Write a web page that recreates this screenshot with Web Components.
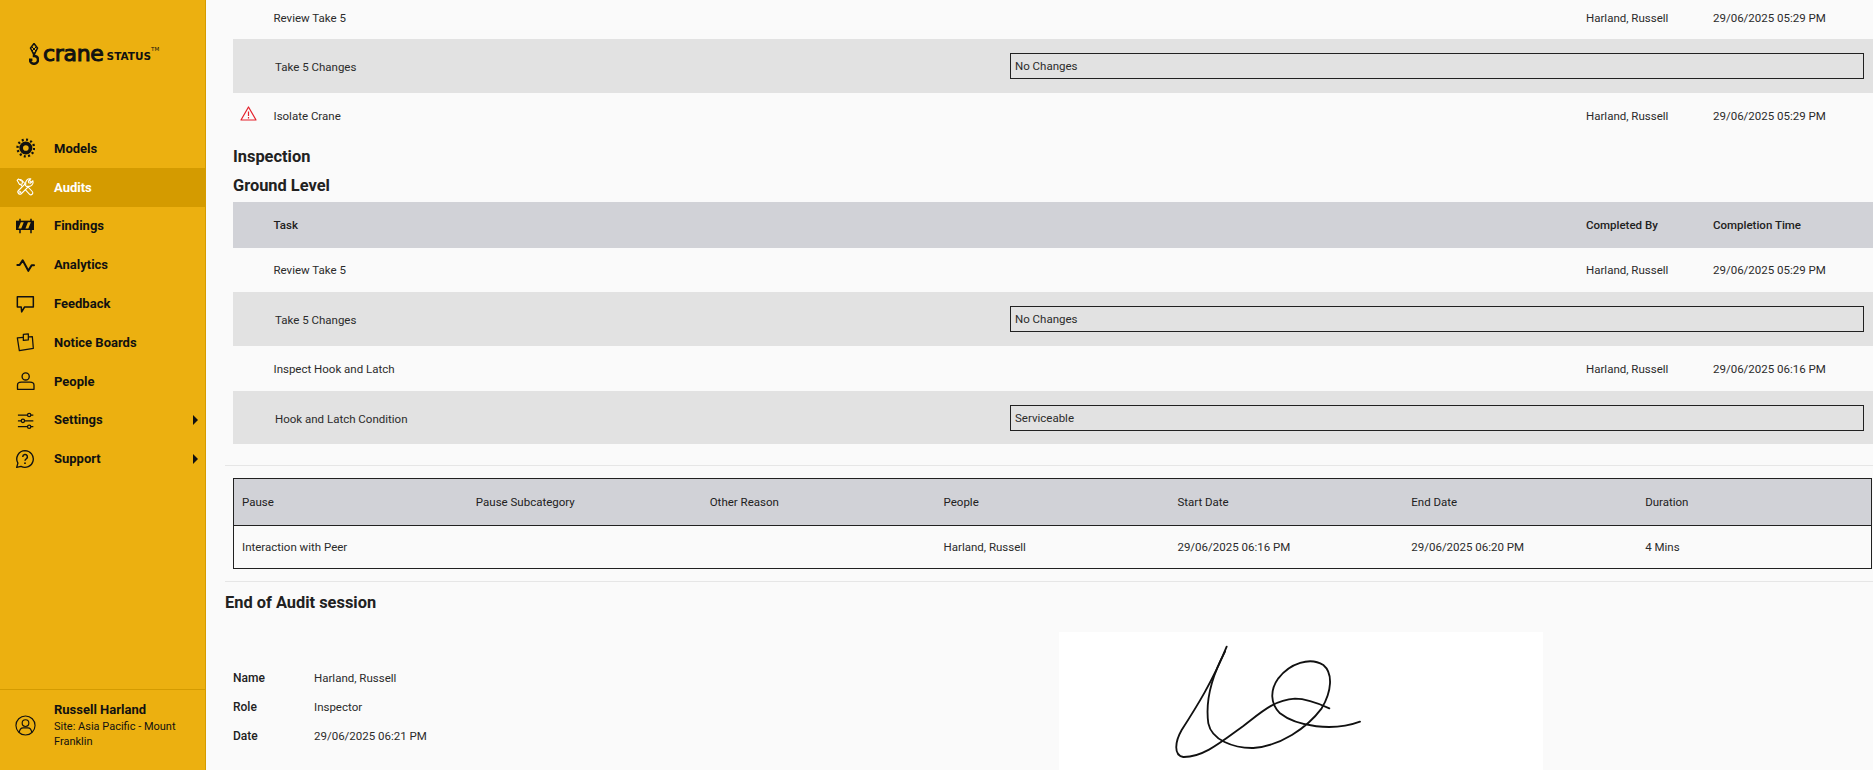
<!DOCTYPE html>
<html lang="en">
<head>
<meta charset="utf-8">
<title>Crane Status - Audit</title>
<style>
  html, body { margin: 0; height: 100%; overflow: hidden; background: #fafafa; }
  body { font-family: Roboto, "Liberation Sans", sans-serif; color: #212121; }
  #app { display: flex; height: 770px; }
</style>
</head>
<body>
<div id="app">
  <app-sidebar>
    <nav-item label="Models" icon="models"></nav-item>
    <nav-item label="Audits" icon="audits" active></nav-item>
    <nav-item label="Findings" icon="findings"></nav-item>
    <nav-item label="Analytics" icon="analytics"></nav-item>
    <nav-item label="Feedback" icon="feedback"></nav-item>
    <nav-item label="Notice Boards" icon="notice"></nav-item>
    <nav-item label="People" icon="people"></nav-item>
    <nav-item label="Settings" icon="settings" more></nav-item>
    <nav-item label="Support" icon="support" more></nav-item>
  </app-sidebar>
  <audit-page>
    <task-row label="Review Take 5" by="Harland, Russell" at="29/06/2025 05:29 PM" style="height:39px;padding-bottom:3px"></task-row>
    <answer-row label="Take 5 Changes" value="No Changes" style="height:54px"></answer-row>
    <task-row label="Isolate Crane" by="Harland, Russell" at="29/06/2025 05:29 PM" warn style="height:46px"></task-row>
    <section-title style="height:29px;margin-top:3px">Inspection</section-title>
    <section-title style="height:29px">Ground Level</section-title>
    <task-row label="Task" by="Completed By" at="Completion Time" head style="height:46px;margin-top:2px"></task-row>
    <task-row label="Review Take 5" by="Harland, Russell" at="29/06/2025 05:29 PM" style="height:44px"></task-row>
    <answer-row label="Take 5 Changes" value="No Changes" style="height:54px"></answer-row>
    <task-row label="Inspect Hook and Latch" by="Harland, Russell" at="29/06/2025 06:16 PM" style="height:45px;padding-top:1px"></task-row>
    <answer-row label="Hook and Latch Condition" value="Serviceable" style="height:53px"></answer-row>
    <pause-table></pause-table>
    <audit-signoff></audit-signoff>
  </audit-page>
</div>

<script>
const ICONS = {
  models: `<circle cx="13" cy="12" r="5.600" fill="none" stroke="currentColor" stroke-width="4.400"/><circle cx="13" cy="12" r="10" fill="none" stroke="currentColor" stroke-width="2.800" stroke-dasharray="2.400 2.830"/>`,
  audits: `<g fill="none" stroke-linecap="round" stroke-linejoin="round">
    <path d="M6.500 5.500L19 19" stroke="#fff" stroke-width="6"/><path d="M6.500 5.500L19 19" stroke="#d49b00" stroke-width="3.400"/>
    <path d="M4 2.500L9 5.500 8.500 8.500 5.500 9 2.500 4z" fill="#d49b00" stroke="#fff" stroke-width="1.300"/>
    <path d="M17 7L6 18" stroke="#fff" stroke-width="6.400"/><path d="M17 7L6 18" stroke="#d49b00" stroke-width="3.800"/>
    <path d="M21.500 4.500L18.500 7.500 16.500 7 16 5 19 2.200A5 5 0 0 0 13 8.500L12.500 10 14 11.500 15.500 11A5 5 0 0 0 21.500 4.500z" fill="#d49b00" stroke="#fff" stroke-width="1.300"/>
    <circle cx="5.800" cy="18.200" r="1.100" stroke="#fff" stroke-width="1.100"/>
  </g>`,
  findings: `<path d="M1.200 5.600H22.800V16.800H1.200z" fill="currentColor"/><path d="M4 15l3-7.500h3.500l-3 7.500zM12.500 15l3-7.500h3.500l-3 7.500z" fill="#ecb010"/><path d="M6 3.400v3M6 16v4.800M19.200 3.400v3M19.200 16v4.800" stroke="currentColor" stroke-width="1.800"/>`,
  analytics: `<path d="M2.800 12H5.500L9.200 6.400 16 19 20 12.400H22.800" fill="none" stroke="currentColor" stroke-width="2.400" stroke-linecap="round" stroke-linejoin="round"/>`,
  feedback: `<path d="M2.800 3.200H22V15.600H11.500L8 21.500 7.500 15.600H2.800z" fill="none" stroke="currentColor" stroke-width="1.800" stroke-linejoin="round"/>`,
  notice: `<g fill="none" stroke="currentColor" stroke-width="1.500" stroke-linejoin="round"><path d="M2.800 7L20.800 5.600 22 19.600 5.200 22.400z"/><path d="M10 10V2.800L16 2.300V9.500z" fill="#ecb010"/></g>`,
  people: `<g fill="none" stroke="currentColor" stroke-width="1.600"><circle cx="12.800" cy="6.500" r="4.300"/><path d="M3 22v-5c0-2.500 2-3.700 4.500-3.700h10.500c2.700 0 4.800 1.300 4.800 3.700v5z" stroke-linejoin="round"/></g>`,
  settings: `<g fill="none" stroke="currentColor" stroke-width="1.500"><path d="M3.500 6h11.500M19 6h3M3.500 13h4M11.500 13h10.500M3.500 20h11.500M19 20h3"/><circle cx="17" cy="6" r="2"/><circle cx="9.500" cy="13" r="2"/><circle cx="17" cy="20" r="2"/></g>`,
  support: `<path d="M12 2a10 10 0 1 1-4.800 18.800L2 22l1.500-5A10 10 0 0 1 12 2z" fill="none" stroke="currentColor" stroke-width="1.600" stroke-linejoin="round"/><path d="M9.300 9.500a2.800 2.800 0 1 1 4.200 2.400c-1 .6-1.500 1.100-1.500 2.300" fill="none" stroke="currentColor" stroke-width="1.800"/><circle cx="12" cy="17" r="1.100" fill="currentColor"/>`
};

class AppSidebar extends HTMLElement {
  connectedCallback() {
    const shadow = this.attachShadow({ mode: 'open' });
    shadow.innerHTML = `
      <style>
        :host { display: flex; flex-direction: column; width: 205px; flex: none; height: 770px; background: #ecb010; border-right: 1px solid #d49b00; color: #111; }
        .logo { display: flex; align-items: flex-end; height: 65px; padding: 0 0 0 29px; color: #111; box-sizing: border-box; }
        .logo svg { flex: none; margin: 0 4px 0 0; }
        .word { font: 400 22px/22px "DejaVu Sans", sans-serif; -webkit-text-stroke: 1px #111; letter-spacing: -.3px; }
        .status { font: 700 10.500px/10px "DejaVu Sans", sans-serif; margin: 0 0 4px 3px; }
        .tm { font: 400 5.500px/6px "DejaVu Sans", sans-serif; margin: 0 0 13px 0; }
        nav { display: flex; flex-direction: column; margin-top: 64px; flex: 1; }
        footer { display: flex; align-items: flex-start; height: 81px; border-top: 1px solid #d49b00; box-sizing: border-box; padding: 12px 8px 0 15px; }
        footer svg { flex: none; margin: 13px 18px 0 0; }
        h4 { margin: 0 0 1px; font: 700 13px/16px Roboto, sans-serif; }
        p { margin: 0; font: 400 11px/15px Roboto, sans-serif; }
      </style>
      <div class="logo">
        <svg width="10" height="22" viewBox="0 0 10 22" fill="none" stroke="#111">
          <path d="M5 .5L8.500 5 6 10H4L1.500 5z" stroke-width="1.500"/>
          <path d="M2 3l5 5M8 3L3 8" stroke-width="1"/>
          <path d="M5 10v3c2.800 0 4 1.700 4 3.800a4 4 0 0 1-8 0h2.400" stroke-width="2.500"/>
        </svg>
        <span class="word">crane</span><span class="status">STATUS</span><span class="tm">TM</span>
      </div>
      <nav><slot></slot></nav>
      <footer>
        <svg width="21" height="21" viewBox="0 0 22 22" fill="none" stroke="#111" stroke-width="1.200">
          <circle cx="11" cy="11" r="10"/><circle cx="11" cy="8.500" r="3.500"/><path d="M4.500 18c.5-3.500 2.500-4.500 4-4.500h5c1.500 0 3.500 1 4 4.500"/>
        </svg>
        <div><h4>Russell Harland</h4><p>Site: Asia Pacific - Mount Franklin</p></div>
      </footer>`;
  }
}
customElements.define('app-sidebar', AppSidebar);

class NavItem extends HTMLElement {
  connectedCallback() {
    const shadow = this.attachShadow({ mode: 'open' });
    const more = this.hasAttribute('more') ? '<span class="more"></span>' : '';
    shadow.innerHTML = `
      <style>
        :host { display: flex; align-items: center; height: 38.800px; flex: none; position: relative; padding-left: 15px; font: 700 13px Roboto, sans-serif; color: #111; }
        :host([active]) { background: #d49b00; color: #fff; }
        svg { width: 20px; height: 20px; flex: none; margin-right: 19px; }
        .more { position: absolute; right: 7px; top: 50%; margin-top: -5px; border-left: 5px solid #111; border-top: 5px solid transparent; border-bottom: 5px solid transparent; }
      </style>
      <svg viewBox="0 0 24 24">${ICONS[this.getAttribute('icon')]}</svg>
      <span>${this.getAttribute('label')}</span>${more}`;
  }
}
customElements.define('nav-item', NavItem);

class AuditPage extends HTMLElement {
  connectedCallback() {
    const shadow = this.attachShadow({ mode: 'open' });
    shadow.innerHTML = `
      <style>
        :host { display: block; flex: 1; min-width: 0; height: 770px; overflow: hidden; padding-left: 27px; box-sizing: border-box; }
      </style>
      <slot></slot>`;
  }
}
customElements.define('audit-page', AuditPage);

class TaskRow extends HTMLElement {
  connectedCallback() {
    const shadow = this.attachShadow({ mode: 'open' });
    const warn = this.hasAttribute('warn') ? `
      <svg class="warn" width="17" height="15" viewBox="0 0 17 15" fill="none" stroke="#e4212b" stroke-width="1.200" stroke-linejoin="round">
        <path d="M8.500 1L16 14H1z"/><path d="M8.500 5.500v4.500M8.500 11v1.400"/>
      </svg>` : '';
    shadow.innerHTML = `
      <style>
        :host { display: grid; grid-template-columns: 40.500px 1fr 127px 160px; align-items: center; box-sizing: border-box; font: 400 11.500px Roboto, sans-serif; color: #2b2b2b; }
        :host([head]) { background: #d1d2d7; font-weight: 500; color: #212121; }
        .mark { display: flex; padding-left: 7px; }
        .warn { margin-top: -5px; }
      </style>
      <div class="mark">${warn}</div>
      <div>${this.getAttribute('label')}</div>
      <div>${this.getAttribute('by')}</div>
      <div>${this.getAttribute('at')}</div>`;
  }
}
customElements.define('task-row', TaskRow);

class AnswerRow extends HTMLElement {
  connectedCallback() {
    const shadow = this.attachShadow({ mode: 'open' });
    shadow.innerHTML = `
      <style>
        :host { display: grid; grid-template-columns: 777px 1fr; align-items: center; box-sizing: border-box; background: #e2e2e2; padding-right: 9px; font: 400 11.500px Roboto, sans-serif; color: #2b2b2b; }
        .label { padding: 2px 0 0 42px; }
        .value { height: 26px; border: 1px solid #212121; box-sizing: border-box; padding-left: 4px; line-height: 24px; }
      </style>
      <div class="label">${this.getAttribute('label')}</div>
      <div class="value">${this.getAttribute('value')}</div>`;
  }
}
customElements.define('answer-row', AnswerRow);

class SectionTitle extends HTMLElement {
  connectedCallback() {
    const shadow = this.attachShadow({ mode: 'open' });
    shadow.innerHTML = `
      <style>
        :host { display: flex; align-items: center; font: 700 16.400px Roboto, sans-serif; color: #212121; }
      </style>
      <slot></slot>`;
  }
}
customElements.define('section-title', SectionTitle);

class PauseTable extends HTMLElement {
  connectedCallback() {
    const shadow = this.attachShadow({ mode: 'open' });
    const heads = ['Pause', 'Pause Subcategory', 'Other Reason', 'People', 'Start Date', 'End Date', 'Duration'];
    const cells = ['Interaction with Peer', '', '', 'Harland, Russell', '29/06/2025 06:16 PM', '29/06/2025 06:20 PM', '4 Mins'];
    const row = (list) => list.map(t => `<div>${t}</div>`).join('');
    shadow.innerHTML = `
      <style>
        :host { display: block; margin: 21px 0 0 -8px; padding: 12px 1px 12px 8px; border-top: 1px solid #e6e6e6; border-bottom: 1px solid #e6e6e6; font: 400 11.500px Roboto, sans-serif; color: #2b2b2b; }
        .table { border: 1px solid #212121; }
        .row { display: grid; grid-template-columns: repeat(7, 1fr); align-items: center; }
        .row div { padding-left: 8px; }
        .head { height: 46px; background: #d1d2d7; border-bottom: 1px solid #212121; color: #212121; }
        .body { height: 42px; }
      </style>
      <div class="table">
        <div class="row head">${row(heads)}</div>
        <div class="row body">${row(cells)}</div>
      </div>`;
  }
}
customElements.define('pause-table', PauseTable);

class AuditSignoff extends HTMLElement {
  connectedCallback() {
    const shadow = this.attachShadow({ mode: 'open' });
    shadow.innerHTML = `
      <style>
        :host { display: block; margin-left: -8px; font: 400 11.500px Roboto, sans-serif; color: #2b2b2b; }
        h3 { margin: 0; height: 41px; display: flex; align-items: center; font: 700 16.400px Roboto, sans-serif; color: #212121; }
        .cols { display: flex; padding-top: 9px; }
        dl { margin: 0; width: 834px; padding: 31px 0 0 8px; display: grid; grid-template-columns: 81px 1fr; grid-auto-rows: 29px; align-items: center; box-sizing: border-box; }
        dt { font-weight: 500; font-size: 12px; color: #212121; }
        dd { margin: 0; }
        .sign { width: 484px; height: 160px; background: #fff; }
        svg { display: block; }
      </style>
      <h3>End of Audit session</h3>
      <div class="cols">
        <dl>
          <dt>Name</dt><dd>Harland, Russell</dd>
          <dt>Role</dt><dd>Inspector</dd>
          <dt>Date</dt><dd>29/06/2025 06:21 PM</dd>
        </dl>
        <div class="sign">
          <svg width="484" height="160" viewBox="57 36 1452 480" fill="none" stroke="#111" stroke-width="5.500" stroke-linecap="round" stroke-linejoin="round">
            <path d="M560 80C520 180 470 260 425 330C405 365 400 405 430 411C490 412 545 365 610 318C660 280 700 240 765 236C800 236 835 250 868 265"/>
            <path d="M555 95C515 170 495 240 505 310C515 360 580 385 640 384C720 378 800 325 845 265C875 215 880 160 850 135C810 110 750 130 715 175C690 210 690 250 720 280C770 320 880 335 960 305"/>
          </svg>
        </div>
      </div>`;
  }
}
customElements.define('audit-signoff', AuditSignoff);
</script>
</body>
</html>
